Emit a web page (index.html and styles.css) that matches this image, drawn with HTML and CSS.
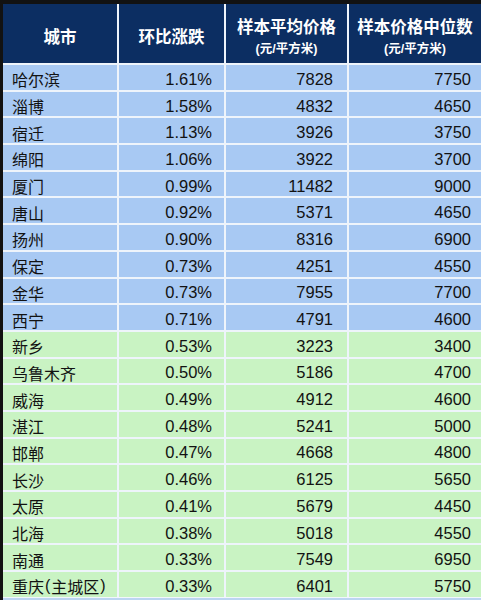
FILE: index.html
```html
<!DOCTYPE html>
<html lang="zh-CN">
<head>
<meta charset="utf-8">
<title>城市房价环比涨跌</title>
<link rel="stylesheet" href="styles.css">
</head>
<body>
<div class="page">
  <div class="grid">
    <div class="hd">城市</div>
    <div class="hd">环比涨跌</div>
    <div class="hd"><span class="hd-main">样本平均价格</span><span class="hd-sub">(元/平方米)</span></div>
    <div class="hd"><span class="hd-main">样本价格中位数</span><span class="hd-sub">(元/平方米)</span></div>

    <div class="c city b">哈尔滨</div><div class="c pct b">1.61%</div><div class="c avg b">7828</div><div class="c med b">7750</div>
    <div class="c city b">淄博</div><div class="c pct b">1.58%</div><div class="c avg b">4832</div><div class="c med b">4650</div>
    <div class="c city b">宿迁</div><div class="c pct b">1.13%</div><div class="c avg b">3926</div><div class="c med b">3750</div>
    <div class="c city b">绵阳</div><div class="c pct b">1.06%</div><div class="c avg b">3922</div><div class="c med b">3700</div>
    <div class="c city b">厦门</div><div class="c pct b">0.99%</div><div class="c avg b">11482</div><div class="c med b">9000</div>
    <div class="c city b">唐山</div><div class="c pct b">0.92%</div><div class="c avg b">5371</div><div class="c med b">4650</div>
    <div class="c city b">扬州</div><div class="c pct b">0.90%</div><div class="c avg b">8316</div><div class="c med b">6900</div>
    <div class="c city b">保定</div><div class="c pct b">0.73%</div><div class="c avg b">4251</div><div class="c med b">4550</div>
    <div class="c city b">金华</div><div class="c pct b">0.73%</div><div class="c avg b">7955</div><div class="c med b">7700</div>
    <div class="c city b">西宁</div><div class="c pct b">0.71%</div><div class="c avg b">4791</div><div class="c med b">4600</div>

    <div class="c city g">新乡</div><div class="c pct g">0.53%</div><div class="c avg g">3223</div><div class="c med g">3400</div>
    <div class="c city g">乌鲁木齐</div><div class="c pct g">0.50%</div><div class="c avg g">5186</div><div class="c med g">4700</div>
    <div class="c city g">威海</div><div class="c pct g">0.49%</div><div class="c avg g">4912</div><div class="c med g">4600</div>
    <div class="c city g">湛江</div><div class="c pct g">0.48%</div><div class="c avg g">5241</div><div class="c med g">5000</div>
    <div class="c city g">邯郸</div><div class="c pct g">0.47%</div><div class="c avg g">4668</div><div class="c med g">4800</div>
    <div class="c city g">长沙</div><div class="c pct g">0.46%</div><div class="c avg g">6125</div><div class="c med g">5650</div>
    <div class="c city g">太原</div><div class="c pct g">0.41%</div><div class="c avg g">5679</div><div class="c med g">4450</div>
    <div class="c city g">北海</div><div class="c pct g">0.38%</div><div class="c avg g">5018</div><div class="c med g">4550</div>
    <div class="c city g">南通</div><div class="c pct g">0.33%</div><div class="c avg g">7549</div><div class="c med g">6950</div>
    <div class="c city g">重庆<span class="paren">(</span>主城区<span class="paren">)</span></div><div class="c pct g">0.33%</div><div class="c avg g">6401</div><div class="c med g">5750</div>
  </div>
  <div class="foot"></div>
</div>
</body>
</html>
```

FILE: styles.css
```css
html, body {
  margin: 0;
  padding: 0;
  background: #121212;
}

.page {
  width: 481px;
  height: 600px;
  overflow: hidden;
  padding-top: 4px;
  padding-left: 3px;
  box-sizing: border-box;
  font-family: "Liberation Sans", "Noto Sans CJK SC", sans-serif;
}

.grid {
  display: grid;
  grid-template-columns: 114px 105px 121px 132px;
  grid-template-rows: 59px repeat(20, 24.7px);
  gap: 2px;
  background: #eef4fb;
}

.hd {
  background: #0c2e62;
  color: #ffffff;
  font-weight: bold;
  font-size: 16.5px;
  display: flex;
  flex-direction: column;
  align-items: center;
  justify-content: center;
  padding-top: 8px;
  box-sizing: border-box;
  line-height: 1.2;
}

.hd-main {
  display: block;
}

.hd-sub {
  display: block;
  font-size: 12.5px;
  margin-top: 4px;
}

.c {
  display: flex;
  align-items: center;
  font-size: 16.5px;
  color: #121212;
  padding-top: 4px;
  box-sizing: border-box;
  white-space: nowrap;
}

.paren {
  margin: 0 1px;
}

.b {
  background: #a8c9f3;
}

.g {
  background: #c9f3c3;
}

.city {
  padding-left: 9px;
  font-size: 16px;
}

.pct {
  justify-content: flex-end;
  padding-right: 12px;
}

.avg {
  justify-content: flex-end;
  padding-right: 14px;
}

.med {
  justify-content: flex-end;
  padding-right: 10px;
}

.foot {
  height: 10px;
  background: #bcd5f2;
  border-top: 1px solid #f2f7fc;
}
```
